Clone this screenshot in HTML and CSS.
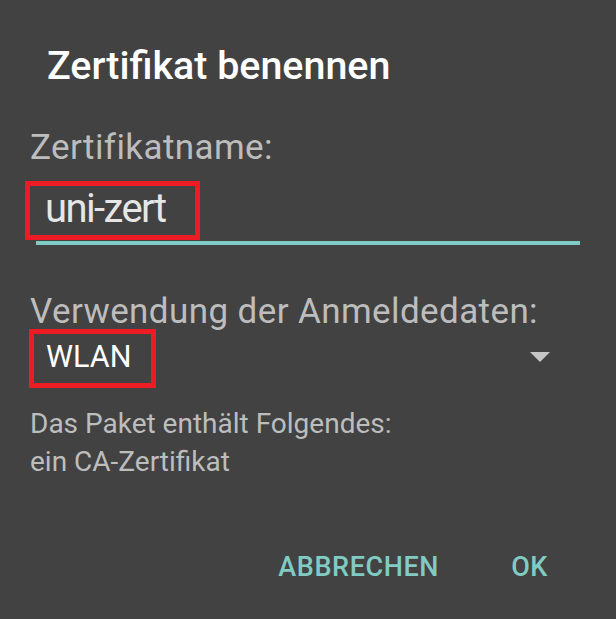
FILE: index.html
```html
<!DOCTYPE html>
<html lang="de">
<head>
<meta charset="utf-8">
<title>Zertifikat benennen</title>
<link rel="stylesheet" href="styles.css">
</head>
<body>
<div class="dialog">
  <h1 class="title">Zertifikat benennen</h1>
  <div class="label name-label">Zertifikatname:</div>
  <div class="field">
    <span class="field-text">uni-zert</span>
    <span class="mark mark-field"></span>
  </div>
  <div class="label usage-label">Verwendung der Anmeldedaten:</div>
  <div class="spinner">
    <span class="spinner-text">WLAN</span>
    <svg class="arrow" width="20" height="10" viewBox="0 0 20 10"><polygon points="0,0 20,0 10,10" fill="#c6c6c6"/></svg>
    <span class="mark mark-spinner"></span>
  </div>
  <div class="desc">Das Paket enthält Folgendes:<br>ein CA-Zertifikat</div>
  <div class="actions">
    <span class="btn">ABBRECHEN</span>
    <span class="btn">OK</span>
  </div>
</div>
</body>
</html>
```
FILE: styles.css
```css
html, body {
  margin: 0;
  padding: 0;
  background: #424242;
}
body {
  font-family: Roboto, "Noto Sans", sans-serif;
  width: 616px;
  height: 619px;
  overflow: hidden;
}
.dialog {
  padding: 43px 36px 0 30px;
}
.title {
  margin: 0 0 0 17px;
  font-size: 39.4px;
  line-height: 46px;
  font-weight: 500;
  color: #ffffff;
}
.label {
  font-size: 35px;
  line-height: 40px;
  letter-spacing: 0.4px;
  color: #bdbdbd;
}
.name-label {
  margin-top: 39px;
}
.field {
  position: relative;
  margin: 17px 0 0 6px;
  padding: 0 0 8px 9px;
  height: 48px;
  font-size: 40px;
  line-height: 48px;
  border-bottom: 4px solid #80cbc4;
}
.field-text {
  display: block;
  color: #e6e6e6;
  letter-spacing: -1.6px;
}
.mark {
  position: absolute;
  box-sizing: border-box;
  border: 5px solid #ed1c24;
}
.mark-field {
  left: -11px;
  top: -4px;
  width: 175px;
  height: 59px;
}
.usage-label {
  margin-top: 47px;
}
.spinner {
  position: relative;
  margin-top: 3px;
  display: flex;
  align-items: center;
  justify-content: space-between;
  height: 44px;
  padding: 0 30px 0 16px;
}
.spinner-text {
  font-size: 30.5px;
  line-height: 44px;
  color: #ffffff;
}
.arrow {
  display: block;
}
.mark-spinner {
  left: -1px;
  top: -6px;
  width: 127px;
  height: 59px;
}
.desc {
  margin-top: 26px;
  font-size: 28px;
  line-height: 38px;
  color: #bdbdbd;
}
.actions {
  margin-top: 68px;
  display: flex;
  justify-content: flex-end;
  gap: 72px;
  padding-right: 32px;
}
.btn {
  font-size: 27px;
  line-height: 36px;
  font-weight: 500;
  letter-spacing: 0.6px;
  color: #80cbc4;
}
```
